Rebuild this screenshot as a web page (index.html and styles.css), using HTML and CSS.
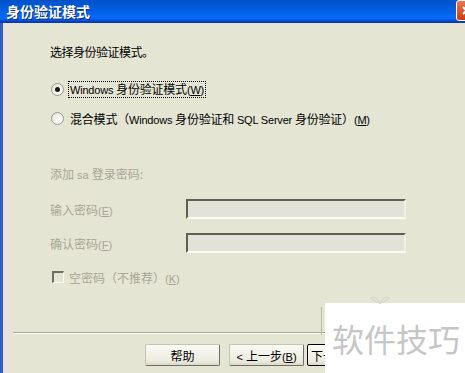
FILE: index.html
```html
<!DOCTYPE html>
<html lang="zh-CN">
    <head>
        <meta charset="UTF-8">
        <title>身份验证模式</title>
        <link rel="stylesheet" href="styles.css">
    </head>
    <body>

        <div class="window">

            <!-- Заголовок окна -->
            <div class="titlebar">
                <span class="title">身份验证模式</span>
                <span class="close">
                    <svg width="9" height="9" viewBox="0 0 9 9">
                        <path d="M1 1 L8 8 M8 1 L1 8" stroke="#fff" stroke-width="2"/>
                    </svg>
                </span>
            </div>

            <div class="frame">
                <div class="strip"></div>
                <div class="client">

                    <div class="page">
                        <p class="heading">选择身份验证模式。</p>

                        <div class="options">
                            <label class="option">
                                <span class="radio checked"></span>
                                <span class="focus"><span class="lat">Windows </span>身份验证模式<span class="lat">(<u>W</u>)</span></span>
                            </label>
                            <label class="option">
                                <span class="radio"></span>
                                <span class="option-text">混合模式（<span class="lat">Windows </span>身份验证和<span class="lat"> SQL Server </span>身份验证）<span class="lat">(<u>M</u>)</span></span>
                            </label>
                        </div>

                        <div class="sa">
                            <p class="sa-title">添加<span class="lat"> sa </span>登录密码:</p>
                            <div class="field">
                                <span class="field-label">输入密码<span class="lat">(<u>E</u>)</span></span>
                                <span class="input"></span>
                            </div>
                            <div class="field second">
                                <span class="field-label">确认密码<span class="lat">(<u>F</u>)</span></span>
                                <span class="input"></span>
                            </div>
                            <label class="check">
                                <span class="box"></span>
                                <span>空密码（不推荐）<span class="lat">(<u>K</u>)</span></span>
                            </label>
                        </div>
                    </div>

                    <!-- Кнопки -->
                    <div class="footer">
                        <div class="separator"></div>
                        <div class="buttons">
                            <span class="btn"><span>帮助</span></span>
                            <span class="btn"><span><span class="lat">&lt; </span>上一步<span class="lat">(<u>B</u>)</span></span></span>
                            <span class="btn default"><span>下一步</span></span>
                        </div>
                    </div>

                </div>
            </div>

            <!-- Водяной знак -->
            <div class="watermark">
                <svg class="logo" width="22" height="12" viewBox="0 0 22 12">
                    <path d="M11 11 C 9 6, 4 4, 2 6 C 4 9, 8 10, 11 11 Z M11 11 C 13 6, 18 4, 20 6 C 18 9, 14 10, 11 11 Z" fill="none" stroke="#d6d6cc" stroke-width="1.2"/>
                </svg>
                <span>软件技巧</span>
            </div>

        </div>

    </body>
</html>
```

FILE: styles.css
```css
/* Базовые стили */

body {
    margin: 0;
    font-family: "Noto Sans CJK SC", sans-serif;
    font-size: 12px;
    color: #000;
    background: #e5e5d4;
}

p {
    margin: 0;
}

u {
    text-decoration: underline;
}

.lat {
    font-family: "Liberation Sans", sans-serif;
    font-size: 11px;
}

.window {
    position: relative;
    width: 465px;
    height: 373px;
    display: flex;
    flex-direction: column;
    overflow: hidden;
}

/* Заголовок окна */

.titlebar {
    height: 21px;
    border-bottom: 2px solid #0a3cb0;
    display: flex;
    align-items: center;
    padding-left: 6px;
    background: linear-gradient(#0052c8, #005ee0 45%, #086cfa 85%, #0650d8);
}

.title {
    font-size: 14px;
    font-weight: bold;
    color: #fff;
    text-shadow: 1px 1px #0b2a8a;
}

.close {
    margin-left: auto;
    margin-right: -12px;
    width: 19px;
    height: 19px;
    border: 1px solid #fff;
    border-radius: 3px;
    background: linear-gradient(#e87850, #c83c18);
    display: flex;
    align-items: center;
    justify-content: center;
}

/* Рамка и клиентская область */

.frame {
    flex: 1;
    display: flex;
    border-left: 3px solid #2d5ec4;
}

.strip {
    width: 10px;
    background: #e8e1dc;
}

.client {
    flex: 1;
    display: flex;
    flex-direction: column;
    background: #e5e5d4;
}

.page {
    flex: 1;
    padding-left: 37px;
}

.heading {
    margin-top: 21px;
    line-height: 16px;
    letter-spacing: -0.5px;
}

/* Переключатели */

.option {
    display: flex;
    align-items: center;
    height: 16px;
}

.option:first-child {
    margin-top: 21px;
}

.option + .option {
    margin-top: 13px;
}

.radio {
    width: 11px;
    height: 11px;
    border-radius: 50%;
    border: 1px solid #9c9c90;
    background: radial-gradient(circle at 60% 60%, #fff, #e0e0d6);
    margin: 0 5px 0 1px;
    display: flex;
    align-items: center;
    justify-content: center;
}

.radio.checked::after {
    content: "";
    width: 5px;
    height: 5px;
    border-radius: 50%;
    background: #1a1a1a;
}

.focus {
    outline: 1px dotted #000;
    padding: 0 1px;
    line-height: 14px;
    letter-spacing: -0.2px;
}

.option-text {
    padding-left: 1px;
    letter-spacing: -0.2px;
}

/* Пароль sa (неактивно) */

.sa {
    color: #a8a696;
}

.sa-title {
    margin-top: 40px;
    line-height: 16px;
}

.field {
    display: flex;
    align-items: center;
    height: 20px;
    margin-top: 16px;
}

.field.second {
    margin-top: 14px;
}

.field-label {
    width: 136px;
}

.input {
    width: 216px;
    height: 16px;
    border-top: 2px solid #5e6152;
    border-left: 2px solid #5e6152;
    border-bottom: 2px solid #fbfbf4;
    border-right: 2px solid #f0f0e6;
    background: #e2e2d8;
}

.check {
    display: flex;
    align-items: center;
    height: 16px;
    margin-top: 16px;
}

.box {
    width: 9px;
    height: 9px;
    border-top: 2px solid #707062;
    border-left: 2px solid #707062;
    border-bottom: 1px solid #fafaf2;
    border-right: 1px solid #fafaf2;
    background: #e5e5d4;
    margin: 0 5px 0 2px;
}

/* Нижняя панель */

.footer {
    padding-bottom: 7px;
}

.separator {
    height: 1px;
    border-top: 1px solid #a9a899;
    background: #fff;
}

.buttons {
    display: flex;
    gap: 9px;
    margin-top: 10px;
    padding-left: 132px;
    width: 180px;
    overflow: hidden;
}

.btn {
    width: 73px;
    height: 20px;
    flex-shrink: 0;
    display: flex;
    align-items: center;
    justify-content: center;
    border: 1px solid #c4c3b4;
    border-right-color: #6f6e64;
    border-bottom-color: #6f6e64;
    border-radius: 2px;
    background: linear-gradient(#fbfbf6, #ecebdf 80%, #d9d8ca);
}

.btn.default {
    margin-left: -6px;
    border: 1px solid #000;
    justify-content: flex-start;
    padding-left: 3px;
}

/* Водяной знак */

.watermark {
    position: absolute;
    left: 325px;
    top: 303px;
    right: 0;
    bottom: 0;
    background: #fff;
    color: #c6c6c6;
    font-size: 32px;
    display: flex;
    align-items: center;
    padding-left: 7px;
}

.watermark::before {
    content: "";
    position: absolute;
    left: -4px;
    top: 4px;
    height: 28px;
    border-left: 1px solid #b8b8ac;
}

.logo {
    position: absolute;
    left: 44px;
    top: -11px;
}
```
